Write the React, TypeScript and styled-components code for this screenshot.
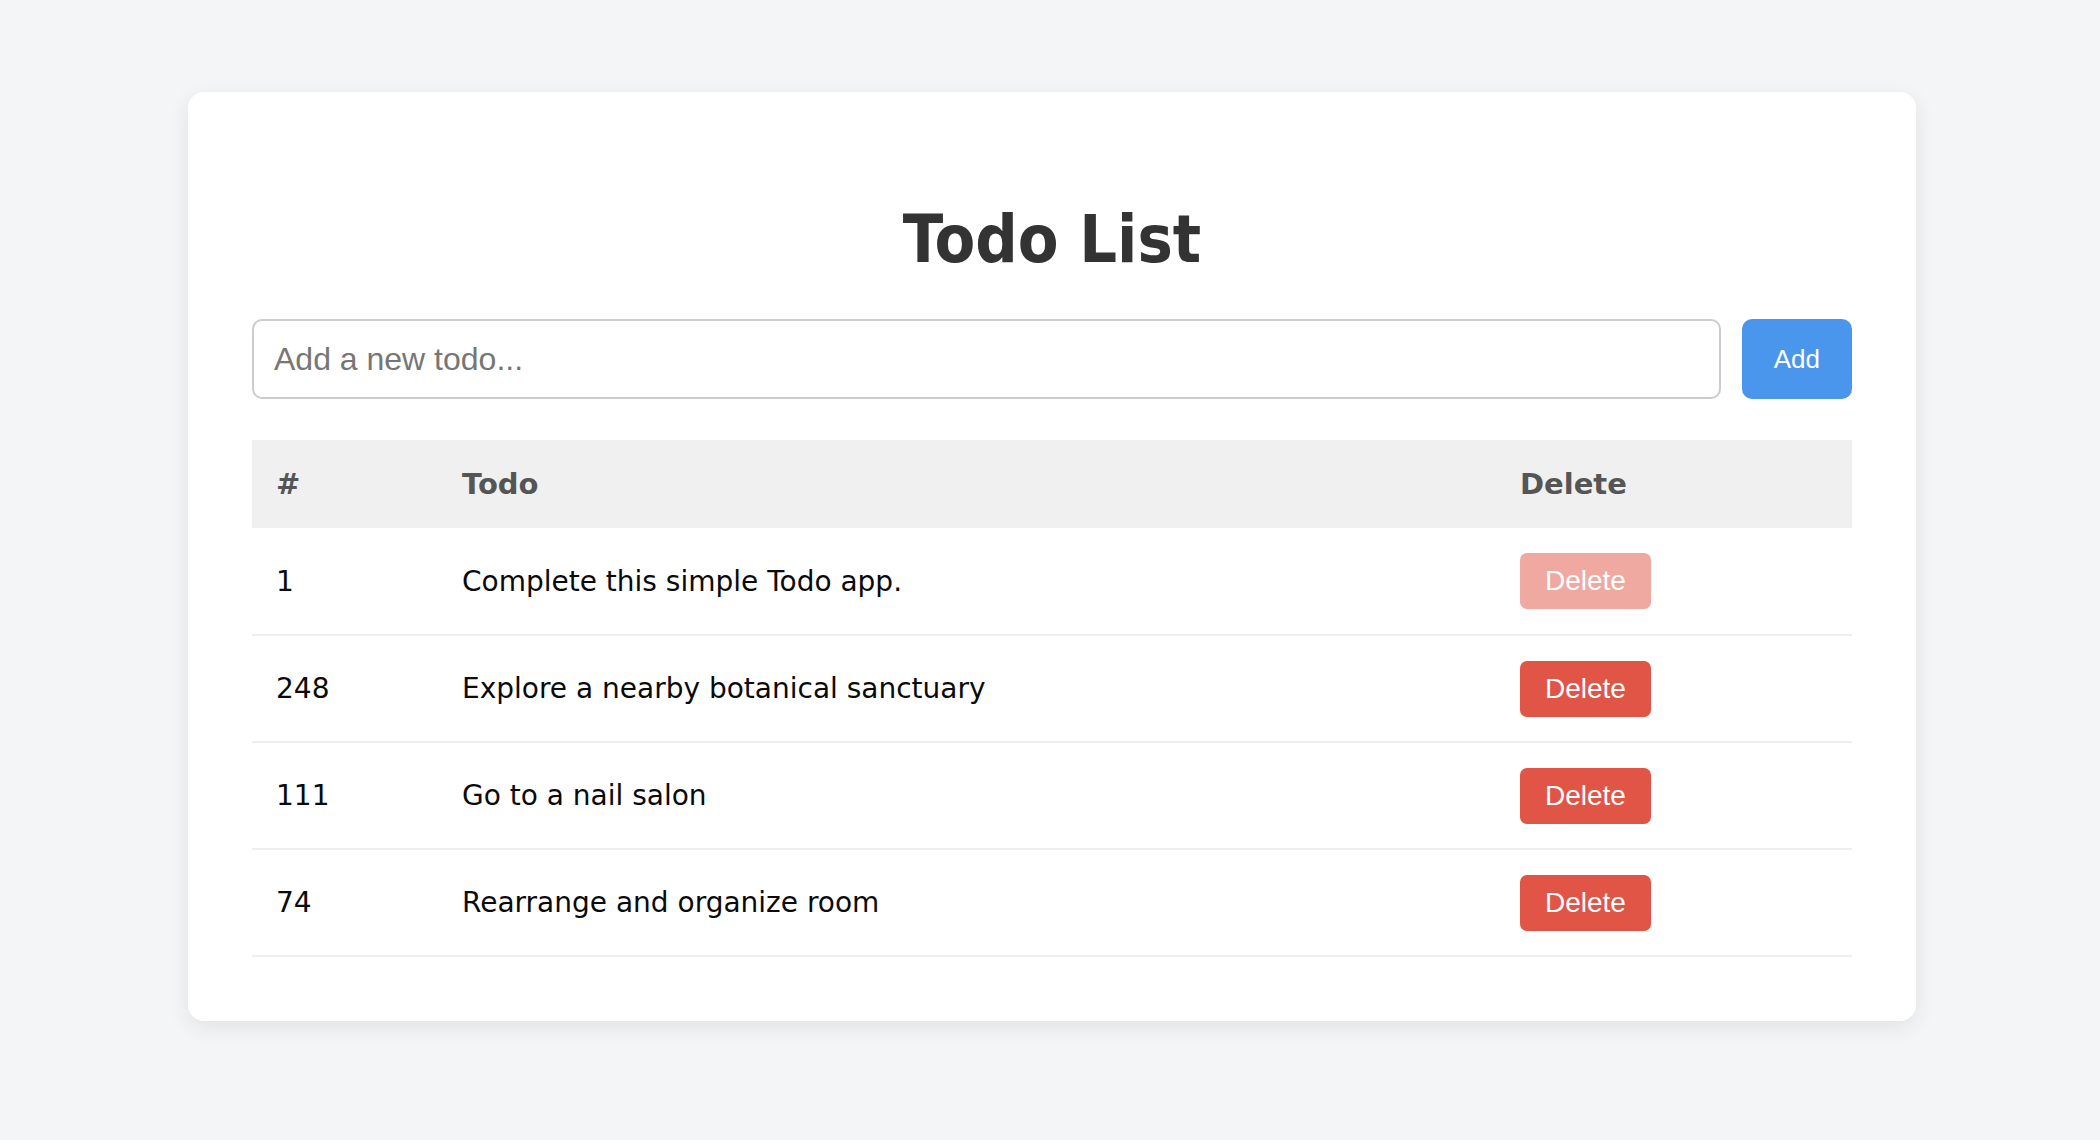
import React, { useState } from "react";
import styled, { createGlobalStyle } from "styled-components";

const GlobalStyle = createGlobalStyle`
  html, body {
    margin: 0;
    padding: 0;
    background: #f4f5f7;
  }
  body {
    font-family: Tahoma, "DejaVu Sans", sans-serif;
  }
`;

const Page = styled.div`
  min-height: 1140px;
  display: flex;
  justify-content: center;
  align-items: flex-start;
  padding: 92px 0 0 4px;
  box-sizing: border-box;
`;

const Card = styled.main`
  width: 1728px;
  box-sizing: border-box;
  background: #ffffff;
  border-radius: 16px;
  box-shadow: 0 6px 22px rgba(0, 0, 0, 0.08);
  padding: 64px;
  display: flex;
  flex-direction: column;
`;

const Title = styled.h1`
  margin: 44px 0 39px;
  text-align: center;
  font-family: Tahoma, "DejaVu Sans Condensed", "DejaVu Sans", sans-serif;
  font-weight: 700;
  font-size: 66px;
  line-height: 80px;
  color: #333333;
`;

const InputRow = styled.form`
  display: flex;
  gap: 21px;
  margin: 0 0 41px;
`;

const TodoInput = styled.input`
  flex: 1;
  height: 80px;
  box-sizing: border-box;
  border: 2px solid #cccccc;
  border-radius: 10px;
  padding: 0 20px;
  font-family: "Liberation Sans", Arial, sans-serif;
  font-size: 32px;
  color: #222;
  outline: none;
  &::placeholder {
    color: #767676;
  }
`;

const AddButton = styled.button`
  height: 80px;
  padding: 0 32px;
  border: none;
  border-radius: 10px;
  background: #4a96ec;
  color: #ffffff;
  font-family: "Liberation Sans", Arial, sans-serif;
  font-size: 26px;
  cursor: pointer;
`;

const Table = styled.table`
  width: 100%;
  border-collapse: collapse;
  table-layout: fixed;
`;

const HeadCell = styled.th<{ $w?: number }>`
  width: ${(p) => (p.$w ? `${p.$w}px` : "auto")};
  box-sizing: border-box;
  height: 88px;
  padding: 0 24px;
  background: #f0f0f0;
  text-align: left;
  font-family: Tahoma, "DejaVu Sans", sans-serif;
  font-weight: 700;
  font-size: 29px;
  color: #555555;
  vertical-align: middle;
`;

const Row = styled.tr`
  border-bottom: 2px solid #eeeeee;
`;

const Cell = styled.td`
  height: 107px;
  box-sizing: border-box;
  padding: 0 24px;
  font-family: Tahoma, "DejaVu Sans", sans-serif;
  font-size: 28px;
  color: #0a0a0a;
  vertical-align: middle;
`;

const DeleteButton = styled.button<{ $faded?: boolean }>`
  height: 56px;
  padding: 0 25px;
  border: none;
  border-radius: 7px;
  background: #e05546;
  opacity: ${(p) => (p.$faded ? 0.5 : 1)};
  color: #ffffff;
  font-family: "Liberation Sans", Arial, sans-serif;
  font-size: 28px;
  cursor: pointer;
`;

type Todo = { id: number; text: string };

const initial: Todo[] = [
  { id: 1, text: "Complete this simple Todo app." },
  { id: 248, text: "Explore a nearby botanical sanctuary" },
  { id: 111, text: "Go to a nail salon" },
  { id: 74, text: "Rearrange and organize room" },
];

export default function App() {
  const [todos, setTodos] = useState<Todo[]>(initial);
  const [value, setValue] = useState("");

  const add = (e: React.FormEvent) => {
    e.preventDefault();
    if (!value.trim()) return;
    setTodos([...todos, { id: Math.floor(Math.random() * 300) + 1, text: value.trim() }]);
    setValue("");
  };

  return (
    <>
      <GlobalStyle />
      <Page>
        <Card>
          <Title>Todo List</Title>
          <InputRow onSubmit={add}>
            <TodoInput
              placeholder="Add a new todo..."
              value={value}
              onChange={(e) => setValue(e.target.value)}
            />
            <AddButton type="submit">Add</AddButton>
          </InputRow>
          <Table>
            <thead>
              <tr>
                <HeadCell $w={186}>#</HeadCell>
                <HeadCell>Todo</HeadCell>
                <HeadCell $w={356}>Delete</HeadCell>
              </tr>
            </thead>
            <tbody>
              {todos.map((t, i) => (
                <Row key={t.id + "-" + i}>
                  <Cell>{t.id}</Cell>
                  <Cell>{t.text}</Cell>
                  <Cell>
                    <DeleteButton
                      $faded={i === 0}
                      onClick={() => setTodos(todos.filter((_, j) => j !== i))}
                    >
                      Delete
                    </DeleteButton>
                  </Cell>
                </Row>
              ))}
            </tbody>
          </Table>
        </Card>
      </Page>
    </>
  );
}
